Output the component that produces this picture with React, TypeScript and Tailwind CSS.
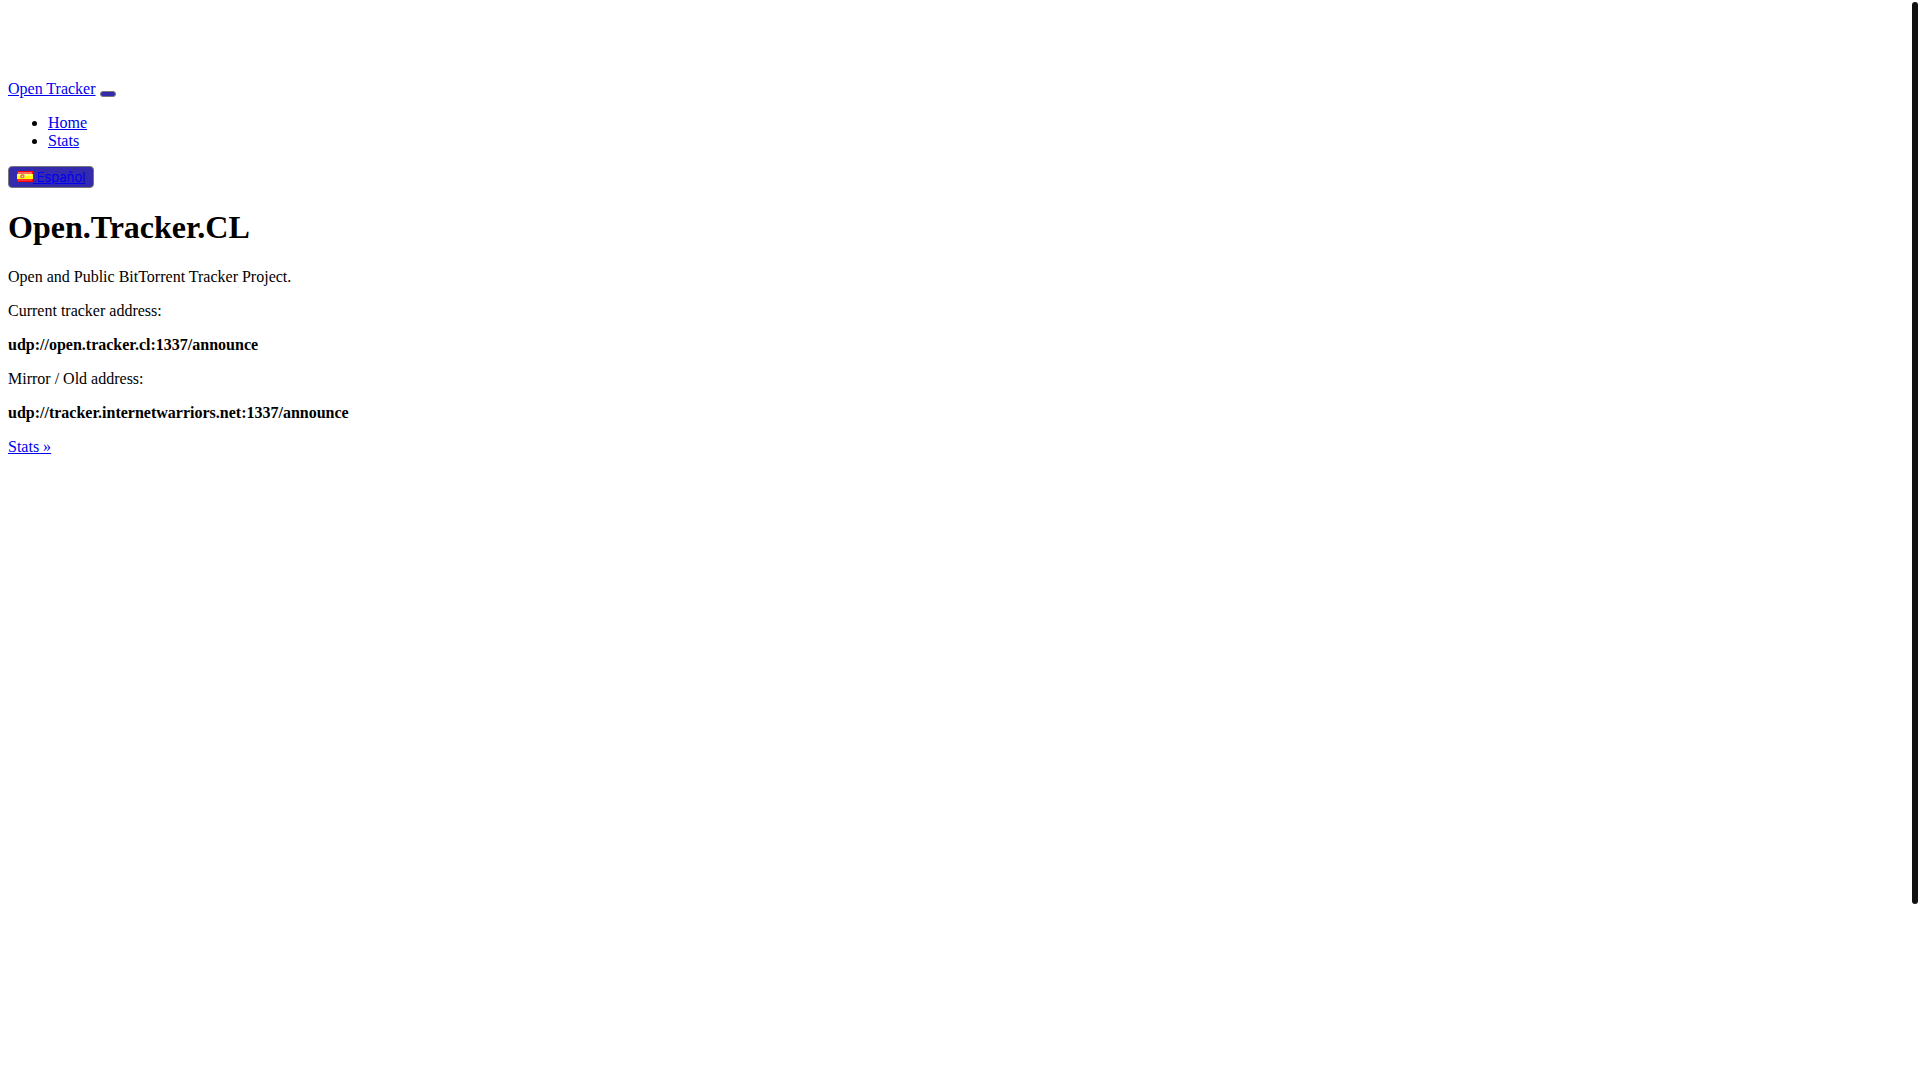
const addresses = [
  { label: "Current tracker address:", url: "udp://open.tracker.cl:1337/announce" },
  { label: "Mirror / Old address:", url: "udp://tracker.internetwarriors.net:1337/announce" },
];

function SpanishFlag() {
  return (
    <svg className="inline-block w-4 h-[11px] align-baseline" viewBox="0 0 16 11" aria-hidden="true">
      <rect width="16" height="11" fill="#f00" />
      <rect x="1" y="1" width="14" height="2" fill="#fd6a62" />
      <rect y="3" width="16" height="5" fill="#ff0" />
      <rect x="1" y="3" width="14" height="2" fill="#ffff6e" />
      <rect x="1" y="8" width="14" height="2" fill="#f33" />
      <rect x="3" y="4" width="1" height="3" fill="#d9a84e" />
      <rect x="4" y="3" width="3" height="1" fill="#e8a060" />
      <rect x="4" y="4" width="3" height="3" fill="#e57b4c" />
      <rect x="5" y="5" width="1" height="1" fill="#fbd9c4" />
      <rect x="7" y="4" width="1" height="3" fill="#e3c45a" />
    </svg>
  );
}

export default function App() {
  return (
    <div className="px-2 pt-20 pb-2 font-['Liberation_Serif',serif] text-base leading-[18px] text-black">
      {/* Navigation */}
      <nav>
        <div>
          <a href="#" className="text-[#0000ee] underline">Open Tracker</a>{" "}
          <button
            type="button"
            aria-label="Toggle navigation"
            className="inline-block rounded-[4px] border border-[#777] bg-[#342aae] px-[7px] py-[2px]"
          />
        </div>
        <ul className="my-4 list-disc pl-10">
          <li><a href="#home" className="text-[#0000ee] underline">Home</a></li>
          <li><a href="#stats" className="text-[#0000ee] underline">Stats</a></li>
        </ul>
        <button
          type="button"
          className="block rounded-[4px] border border-[#777] bg-[#342aae] px-2 py-[2px] font-['Inter',sans-serif] text-[13px] leading-4"
        >
          <a href="#es" className="text-[#0000ee] underline">
            <SpanishFlag /> Español
          </a>
        </button>
      </nav>

      {/* Tracker info */}
      <main>
        <h1 className="mt-[21px] mb-[22px] text-[32px] leading-[37px] font-bold">Open.Tracker.CL</h1>
        <p className="my-4">Open and Public BitTorrent Tracker Project.</p>
        {addresses.map((address) => (
          <div key={address.url}>
            <p className="my-4">{address.label}</p>
            <p className="my-4 font-bold">{address.url}</p>
          </div>
        ))}
        <p className="my-4">
          <a href="#stats" className="text-[#0000ee] underline">Stats »</a>
        </p>
      </main>

      {/* Scroll thumb */}
      <div className="fixed top-0.5 right-0.5 h-[902px] w-1.5 rounded-[3px] bg-[#111]" />
    </div>
  );
}
